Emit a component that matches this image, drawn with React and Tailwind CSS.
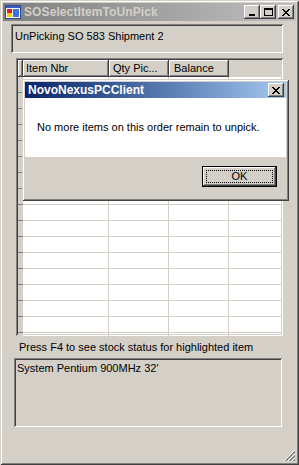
const raised =
  "shadow-[inset_-1px_-1px_0_#404040,inset_1px_1px_0_#ffffff,inset_-2px_-2px_0_#808080]";
const sunken =
  "shadow-[inset_1px_1px_0_#808080,inset_-1px_-1px_0_#ffffff,inset_2px_2px_0_#404040,inset_-2px_-2px_0_#d4d0c8]";

function CapBtn({ children, className = "" }) {
  return (
    <div
      className={`w-[16px] h-[14px] bg-[#d4d0c8] ${raised} flex items-center justify-center ${className}`}
    >
      {children}
    </div>
  );
}

function CloseGlyph() {
  return (
    <svg width="8" height="7" viewBox="0 0 8 7" shapeRendering="crispEdges">
      <path
        d="M0 0h2v1H0zM6 0h2v1H6zM1 1h2v1H1zM5 1h2v1H5zM2 2h4v1H2zM3 3h2v1H3zM2 4h4v1H2zM1 5h2v1H1zM5 5h2v1H5zM0 6h2v1H0zM6 6h2v1H6z"
        fill="#000"
      />
    </svg>
  );
}

export default function App() {
  const rows = Array.from({ length: 17 });
  return (
    <div className="w-[299px] h-[465px] bg-[#d4d0c8] relative font-['Liberation_Sans',Arial,sans-serif] text-[11px] leading-[13px] text-black shadow-[inset_1px_1px_0_#d4d0c8,inset_-1px_-1px_0_#404040,inset_2px_2px_0_#ffffff,inset_-2px_-2px_0_#808080] p-[3px] flex flex-col overflow-hidden">
      {/* Title bar */}
      <div className="h-[18px] bg-linear-to-r from-[#808080] to-[#c0c0c0] flex items-center pl-[2px] pr-[2px] shrink-0">
        <svg width="16" height="16" viewBox="0 0 16 16" shapeRendering="crispEdges">
          <rect x="0.5" y="1.5" width="15" height="13" fill="#fff" stroke="#2a4a9a" />
          <rect x="1" y="2" width="14" height="2" fill="#3a5ac8" />
          <rect x="2" y="5" width="5" height="4" fill="#e02020" />
          <rect x="2" y="9" width="5" height="4" fill="#f0d000" />
          <rect x="8" y="5" width="6" height="8" fill="#4070e0" />
        </svg>
        <span className="ml-[3px] font-bold text-[12px] text-[#d4d0c8] tracking-[0.1px]">
          SOSelectItemToUnPick
        </span>
        <div className="ml-auto flex items-center">
          <CapBtn>
            <div className="w-[6px] h-[2px] bg-black mt-[6px] mr-[1px]" />
          </CapBtn>
          <CapBtn>
            <div className="w-[9px] h-[8px] border border-black border-t-2" />
          </CapBtn>
          <CapBtn className="ml-[2px]">
            <CloseGlyph />
          </CapBtn>
        </div>
      </div>

      {/* Text box 1 */}
      <div
        className={`mt-[3px] ml-[8px] w-[272px] h-[29px] bg-[#d4d0c8] ${sunken} pl-[4px] pt-[6px] shrink-0`}
      >
        UnPicking SO 583 Shipment 2
      </div>

      {/* Grid */}
      <div
        className={`mt-[5px] ml-[13px] w-[267px] h-[278px] bg-white ${sunken} p-[2px] shrink-0 overflow-hidden flex flex-col`}
      >
        <div className="h-[17px] flex bg-[#d4d0c8] shrink-0">
          <div className={`w-[5px] ${raised}`} />
          <div className={`w-[86px] ${raised} pl-[3px] flex items-center`}>Item Nbr</div>
          <div className={`w-[60px] ${raised} pl-[4px] flex items-center`}>Qty Pic...</div>
          <div className={`w-[60px] ${raised} pl-[5px] flex items-center`}>Balance</div>
          <div className="flex-1" />
        </div>
        {rows.map((_, i) => (
          <div key={i} className="h-[16px] flex shrink-0">
            <div className="w-[5px] bg-[#d4d0c8] border-b border-[#808080]" />
            <div className="w-[86px] border-r border-b border-[#d4d0c8]" />
            <div className="w-[60px] border-r border-b border-[#d4d0c8]" />
            <div className="w-[60px] border-r border-b border-[#d4d0c8]" />
            <div className="flex-1 border-b border-[#d4d0c8]" />
          </div>
        ))}
      </div>

      {/* Label */}
      <div className="ml-[16px] h-[22px] flex items-center shrink-0">
        Press F4 to see stock status for highlighted item
      </div>

      {/* Text box 2 */}
      <div
        className={`ml-[11px] w-[268px] h-[69px] bg-[#d4d0c8] ${sunken} pl-[3px] pt-[4px] shrink-0`}
      >
        System Pentium 900MHz 32'
      </div>

      {/* Size grip */}
      <svg
        className="absolute right-[3px] bottom-[3px]"
        width="12"
        height="12"
        viewBox="0 0 12 12"
        shapeRendering="crispEdges"
      >
        <path d="M11 0L0 11M11 4L4 11M11 8L8 11" stroke="#ffffff" />
        <path d="M11 1L1 11M11 2L2 11M11 5L5 11M11 6L6 11M11 9L9 11M11 10L10 11" stroke="#808080" />
      </svg>

      {/* Message box */}
      <div className="absolute left-[22px] top-[79px] w-[267px] h-[122px] bg-[#d4d0c8] shadow-[inset_1px_1px_0_#d4d0c8,inset_-1px_-1px_0_#404040,inset_2px_2px_0_#ffffff,inset_-2px_-2px_0_#808080] p-[3px] flex flex-col">
        <div className="h-[16px] bg-linear-to-r from-[#0a246a] to-[#a6caf0] flex items-center pl-[3px] pr-[2px] shrink-0">
          <span className="font-bold text-[12px] text-white">NovoNexusPCClient</span>
          <CapBtn className="ml-auto">
            <CloseGlyph />
          </CapBtn>
        </div>
        <div className="h-[59px] bg-white pl-[12px] pt-[23px] shrink-0">
          No more items on this order remain to unpick.
        </div>
        <div className="flex-1 flex justify-end items-start pt-[9px] pr-[9px]">
          <div className="w-[75px] h-[21px] border border-black bg-[#d4d0c8]">
            <div
              className={`w-full h-full ${raised} p-[3px]`}
            >
              <div className="w-full h-full border border-dotted border-black flex items-center justify-center">
                OK
              </div>
            </div>
          </div>
        </div>
      </div>
    </div>
  );
}
